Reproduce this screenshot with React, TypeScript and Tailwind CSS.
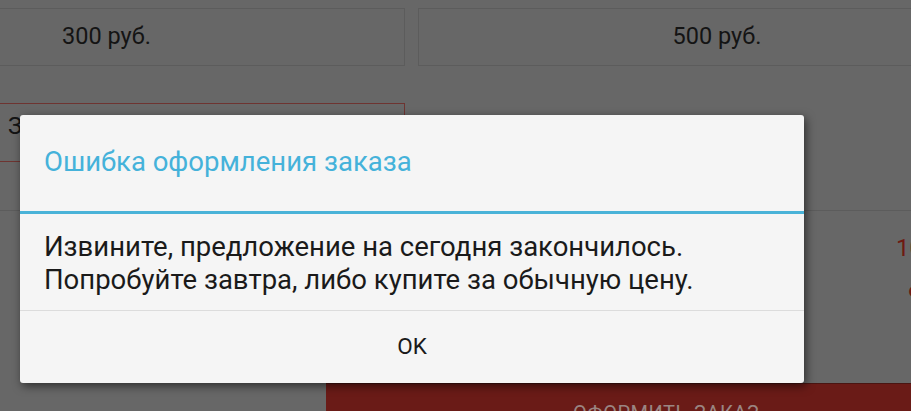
import React from "react";

export default function App() {
  const font = { fontFamily: "Roboto, 'Noto Sans', sans-serif" };
  return (
    <div
      className="relative w-[911px] h-[411px] overflow-hidden bg-[#676767]"
      style={font}
    >
      {/* Background screen (dimmed) */}
      <div className="flex flex-col">
        <div className="flex gap-[13px] pt-[8px] -ml-[192px]">
          <div className="shrink-0 w-[597px] h-[58px] border border-[#5c5c5c] flex items-center justify-center text-[23.5px] text-[#141414]">
            300 руб.
          </div>
          <div className="shrink-0 w-[598px] h-[58px] border border-[#5c5c5c] flex items-center justify-center text-[23.5px] text-[#141414]">
            500 руб.
          </div>
        </div>
        <div className="mt-[37px] -ml-[2px] w-[407px] h-[59px] border border-[#6e3431] flex items-start pt-[5px] pl-[9px] text-[23.5px] text-[#141414] whitespace-nowrap">
          Заказать 1 000 руб.
        </div>
        <div className="mt-[48px] h-[1px] bg-[#5c5c5c]" />
        <div className="flex flex-col items-start pl-[896px] h-[172px] pt-[21px] text-[24px] text-[#6e1a12] leading-[33px] whitespace-nowrap">
          <span>100 руб.</span>
          <span className="pl-[12px] mt-[14px]">90 руб.</span>
        </div>
        <div className="flex">
          <div className="w-[326px] shrink-0" />
          <div className="flex-1 h-[40px] bg-[#6a1b17] border-t border-[#4a1512] flex items-start pt-[14px] pl-[247px] text-[20px] text-[#9a8582] whitespace-nowrap tracking-[0.5px]">
            ОФОРМИТЬ ЗАКАЗ
          </div>
        </div>
      </div>

      {/* Dialog */}
      <div className="absolute left-[20px] top-[115px] w-[784px] rounded-[3px] bg-[#f5f5f5] shadow-[2px_3px_10px_rgba(0,0,0,0.55)] flex flex-col">
        <div className="h-[96px] flex items-center pl-[24px] pb-[2px] text-[27.5px] text-[#45b2da] whitespace-nowrap">
          Ошибка оформления заказа
        </div>
        <div className="h-[3px] bg-[#4ab3d8]" />
        <div className="h-[96px] flex flex-col justify-center pl-[24px] pt-[2px] text-[27.5px] leading-[33px] text-[#1a1a1a] whitespace-nowrap">
          <span>Извините, предложение на сегодня закончилось.</span>
          <span>Попробуйте завтра, либо купите за обычную цену.</span>
        </div>
        <div className="h-[1px] bg-[#dcdcdc]" />
        <div className="h-[72px] flex items-center justify-center text-[22.5px] text-[#1a1a1a]">
          OK
        </div>
      </div>
    </div>
  );
}
